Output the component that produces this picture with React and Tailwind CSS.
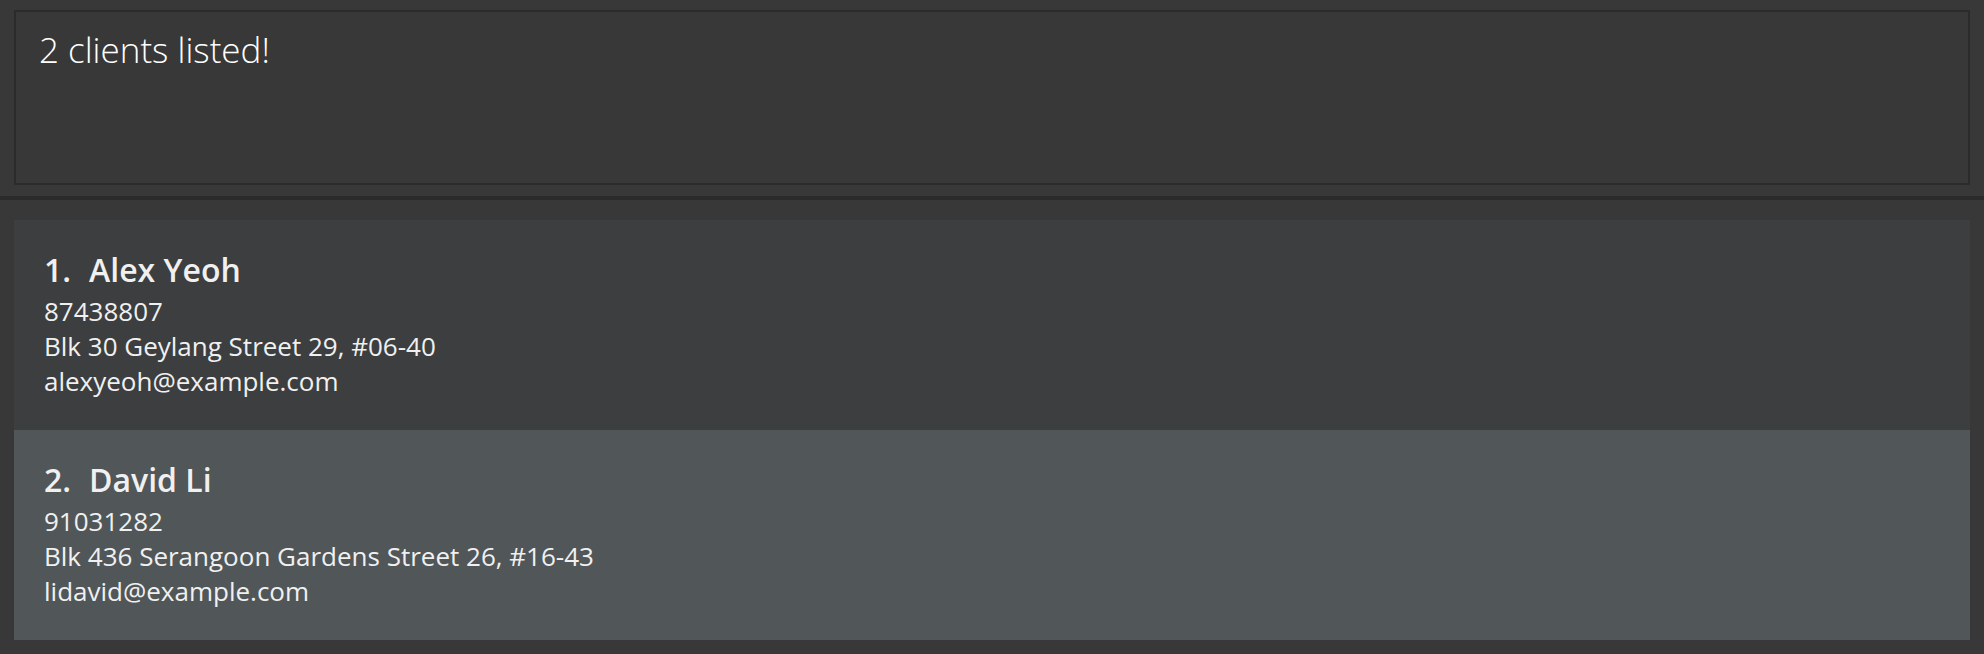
import React from "react";

const clients = [
  {
    id: 1,
    name: "Alex Yeoh",
    phone: "87438807",
    address: "Blk 30 Geylang Street 29, #06-40",
    email: "alexyeoh@example.com",
  },
  {
    id: 2,
    name: "David Li",
    phone: "91031282",
    address: "Blk 436 Serangoon Gardens Street 26, #16-43",
    email: "lidavid@example.com",
  },
];

function ClientCard({ client, index }) {
  const bg = index % 2 === 0 ? "bg-[#3c3e3f]" : "bg-[#515658]";
  return (
    <div className={`${bg} h-[210px] pl-[30px] pt-[29px] text-[#f0f0f0]`}>
      <div className="flex items-baseline gap-[18px] text-[32px] leading-[42px] font-semibold">
        <span>{client.id}.</span>
        <span>{client.name}</span>
      </div>
      <div className="mt-[3px] text-[26px] leading-[35px]">
        <div>{client.phone}</div>
        <div>{client.address}</div>
        <div>{client.email}</div>
      </div>
    </div>
  );
}

export default function App() {
  return (
    <div
      className="w-[1984px] h-[654px] overflow-hidden bg-[#383838] flex flex-col"
      style={{ fontFamily: '"Open Sans", "Noto Sans", sans-serif' }}
    >
      {/* result display */}
      <div className="px-[14px] pt-[10px] pb-[11px]">
        <div className="h-[175px] border-2 border-[#2b2b2b] bg-[#383838] pl-[23px] pt-[12px]">
          <p className="text-[35px] font-light text-white">2 clients listed!</p>
        </div>
      </div>

      <div className="h-[4px] bg-[#2b2b2b]" />

      {/* client list */}
      <div className="px-[14px] pt-[20px] flex flex-col">
        {clients.map((c, i) => (
          <ClientCard key={c.id} client={c} index={i} />
        ))}
      </div>
    </div>
  );
}
